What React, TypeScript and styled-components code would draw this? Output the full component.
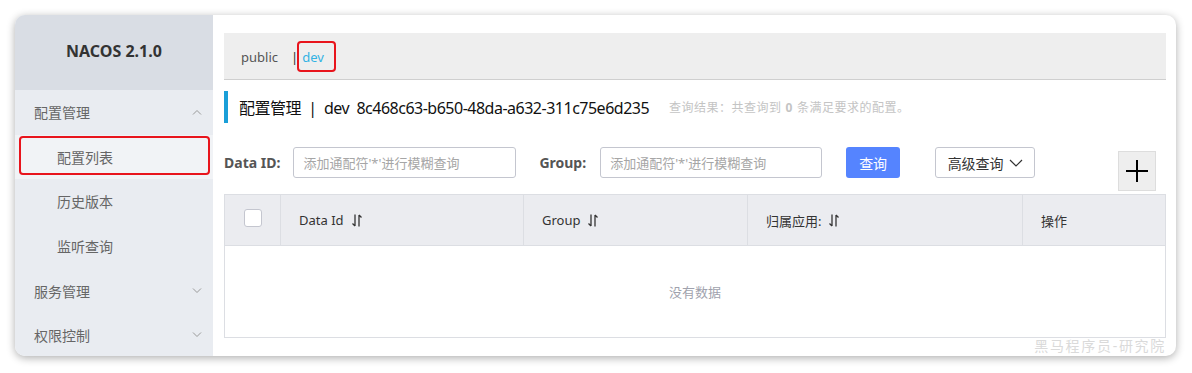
import React from "react";
import styled, { createGlobalStyle } from "styled-components";

const GlobalStyle = createGlobalStyle`
  html, body { margin: 0; padding: 0; background: #fff; }
  body { font-family: "Noto Sans", "Noto Sans CJK SC", sans-serif; }
  * { box-sizing: border-box; }
`;

const Page = styled.div`
  padding: 15px 16px 17px 15px;
`;

const Card = styled.div`
  position: relative;
  display: flex;
  width: 1161px;
  height: 341px;
  border-radius: 10px;
  background: #fff;
  box-shadow: 0 2px 9px rgba(0, 0, 0, 0.32);
  overflow: hidden;
`;

const Sidebar = styled.aside`
  flex: none;
  width: 198px;
  background: #e9ecf1;
  display: flex;
  flex-direction: column;
`;

const Brand = styled.div`
  height: 75px;
  flex: none;
  background: #d9dde4;
  display: flex;
  align-items: center;
  justify-content: center;
  padding-bottom: 3px;
  font-weight: 700;
  font-size: 16px;
  color: #333;
`;

const MenuItem = styled.div<{ $sub?: boolean; $active?: boolean }>`
  position: relative;
  flex: none;
  height: 44.6px;
  display: flex;
  align-items: center;
  justify-content: space-between;
  padding: 0 11px 0 ${(p) => (p.$sub ? 42 : 19)}px;
  font-size: 14px;
  color: #666;
  background: ${(p) => (p.$active ? "#f1f3f6" : "transparent")};
  ${(p) =>
    p.$active
      ? `&::after {
    content: "";
    position: absolute;
    left: 4px;
    right: 3px;
    top: 1px;
    bottom: 4px;
    border: 2px solid #e8141c;
    border-radius: 4px;
  }`
      : ""}
`;

const Main = styled.main`
  flex: 1;
  min-width: 0;
  padding: 18px 10px 0 11px;
  display: flex;
  flex-direction: column;
`;

const NamespaceBar = styled.div`
  height: 47px;
  flex: none;
  background: #eeeeee;
  border-bottom: 1px solid #cfcfcf;
  display: flex;
  align-items: center;
  padding: 2px 0 0 17px;
  font-size: 13px;
  color: #555;
`;

const NsItem = styled.span<{ $current?: boolean }>`
  color: ${(p) => (p.$current ? "#33b2e3" : "#555")};
`;

const NsSep = styled.span`
  margin: 0 5px 0 13px;
  color: #333;
`;

const NsFrame = styled.span`
  display: inline-flex;
  align-items: center;
  height: 31px;
  margin: -2px 0 0 -6px;
  padding: 2px 10px 0 3px;
  border: 2px solid #e8141c;
  border-radius: 4px;
`;

const TitleBlock = styled.div`
  margin-top: 11px;
  height: 32px;
  flex: none;
  border-left: 4px solid #1a9fd8;
  padding-left: 11px;
  display: flex;
  align-items: center;
`;

const Title = styled.span`
  font-size: 16px;
  color: #111;
  white-space: pre;
  letter-spacing: -0.5px;
`;

const Hint = styled.span`
  margin-left: 20px;
  font-size: 12px;
  letter-spacing: 0.5px;
  color: #c4c4c4;
  b {
    font-weight: 700;
    margin: 0 4px;
  }
`;

const SearchRow = styled.div`
  margin-top: 24px;
  display: flex;
  align-items: flex-start;
  flex: none;
`;

const Label = styled.label<{ $gap: number; $lead?: number }>`
  height: 31px;
  display: flex;
  align-items: center;
  font-weight: 700;
  font-size: 14px;
  color: #555;
  margin-left: ${(p) => p.$lead ?? 0}px;
  margin-right: ${(p) => p.$gap}px;
`;

const Input = styled.input<{ $w: number }>`
  width: ${(p) => p.$w}px;
  height: 31px;
  border: 1px solid #c4c6cf;
  border-radius: 3px;
  padding: 0 9px;
  font-family: inherit;
  font-size: 13px;
  color: #333;
  outline: none;
  &::placeholder {
    color: #a6a6a6;
  }
`;

const PrimaryButton = styled.button`
  margin-left: 24px;
  width: 54px;
  height: 31px;
  border: none;
  border-radius: 3px;
  background: #5584ff;
  color: #fff;
  font-family: inherit;
  font-size: 14px;
`;

const GhostButton = styled.button`
  margin-left: 35px;
  width: 100px;
  height: 31px;
  border: 1px solid #c4c6cf;
  border-radius: 3px;
  background: #fff;
  color: #333;
  font-family: inherit;
  font-size: 14px;
  display: flex;
  align-items: center;
  justify-content: center;
  gap: 5px;
  padding: 0;
`;

const AddButton = styled.button`
  margin: 4px 10px 0 auto;
  width: 38px;
  height: 40px;
  border: 1px solid #dddddd;
  background: #eeeeee;
  display: flex;
  align-items: center;
  justify-content: center;
  padding: 0;
`;

const Table = styled.div`
  margin-top: 3px;
  border: 1px solid #dcdee3;
  display: grid;
  grid-template-columns: 55px 243px 224px 275px 1fr;
  grid-template-rows: 51px 91px;
`;

const HeadCell = styled.div<{ $first?: boolean }>`
  background: #ebecf0;
  border-left: ${(p) => (p.$first ? "none" : "1px solid #dcdee3")};
  border-bottom: 1px solid #dcdee3;
  display: flex;
  align-items: center;
  justify-content: ${(p) => (p.$first ? "center" : "flex-start")};
  padding-left: ${(p) => (p.$first ? 0 : 18)}px;
  font-size: 13px;
  color: #333;
  gap: 8px;
`;

const Checkbox = styled.span`
  width: 18px;
  height: 18px;
  margin-top: -5px;
  border: 1px solid #c4c6cf;
  border-radius: 3px;
  background: #fff;
`;

const Empty = styled.div`
  grid-column: 1 / -1;
  display: flex;
  align-items: center;
  justify-content: center;
  font-size: 13px;
  color: #a0a2ad;
`;

const Watermark = styled.div`
  position: absolute;
  right: 10px;
  bottom: 1px;
  font-size: 14px;
  letter-spacing: 1.7px;
  color: #dadada;
`;

const Chevron = ({ up }: { up?: boolean }) => (
  <svg width="10" height="6" viewBox="0 0 10 6" fill="none">
    <polyline
      points={up ? "1,5.5 5,1.5 9,5.5" : "1,0.5 5,4.5 9,0.5"}
      stroke="#999"
      strokeWidth="1"
    />
  </svg>
);

const SortIcon = () => (
  <svg width="10" height="13" viewBox="0 0 10 13" fill="none">
    <path d="M3 0.5V12 M0.5 9.5L3 12" stroke="#333" strokeWidth="1.3" />
    <path d="M7 12.5V1 M9.5 3.5L7 1" stroke="#333" strokeWidth="1.3" />
  </svg>
);

const DownIcon = () => (
  <svg width="14" height="8" viewBox="0 0 14 8" fill="none">
    <polyline points="1,1 7,7 13,1" stroke="#333" strokeWidth="1.2" />
  </svg>
);

const PlusIcon = () => (
  <svg width="22" height="22" viewBox="0 0 22 22">
    <path d="M0 11H22M11 0V22" stroke="#000" strokeWidth="2" />
  </svg>
);

const menu = [
  { label: "配置管理", chevron: "up" },
  { label: "配置列表", sub: true, active: true },
  { label: "历史版本", sub: true },
  { label: "监听查询", sub: true },
  { label: "服务管理", chevron: "down" },
  { label: "权限控制", chevron: "down" },
];

const columns = ["Data Id", "Group", "归属应用:"];

export default function App() {
  return (
    <>
      <GlobalStyle />
      <Page>
        <Card>
          <Sidebar>
            <Brand>NACOS 2.1.0</Brand>
            {menu.map((m) => (
              <MenuItem key={m.label} $sub={m.sub} $active={m.active}>
                <span>{m.label}</span>
                {m.chevron && <Chevron up={m.chevron === "up"} />}
              </MenuItem>
            ))}
          </Sidebar>
          <Main>
            <NamespaceBar>
              <NsItem>public</NsItem>
              <NsSep>|</NsSep>
              <NsFrame>
                <NsItem $current>dev</NsItem>
              </NsFrame>
            </NamespaceBar>
            <TitleBlock>
              <Title>{"配置管理  |  dev  8c468c63-b650-48da-a632-311c75e6d235"}</Title>
              <Hint>
                查询结果：共查询到<b>0</b>条满足要求的配置。
              </Hint>
            </TitleBlock>
            <SearchRow>
              <Label $gap={13}>Data ID:</Label>
              <Input $w={223} placeholder="添加通配符'*'进行模糊查询" />
              <Label $lead={23} $gap={14}>
                Group:
              </Label>
              <Input $w={222} placeholder="添加通配符'*'进行模糊查询" />
              <PrimaryButton>查询</PrimaryButton>
              <GhostButton>
                高级查询
                <DownIcon />
              </GhostButton>
              <AddButton>
                <PlusIcon />
              </AddButton>
            </SearchRow>
            <Table>
              <HeadCell $first>
                <Checkbox />
              </HeadCell>
              {columns.map((c) => (
                <HeadCell key={c}>
                  {c}
                  <SortIcon />
                </HeadCell>
              ))}
              <HeadCell>操作</HeadCell>
              <Empty>没有数据</Empty>
            </Table>
          </Main>
          <Watermark>黑马程序员-研究院</Watermark>
        </Card>
      </Page>
    </>
  );
}
